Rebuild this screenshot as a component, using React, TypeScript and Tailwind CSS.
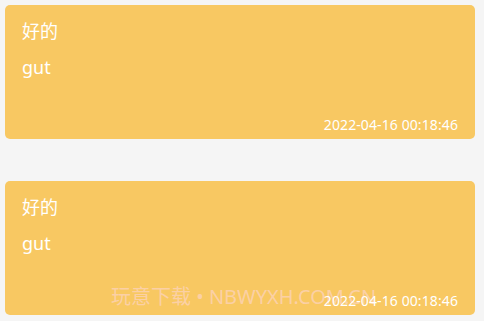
import React from "react";

// -- Data ----------------------------------------------------------------------

type Note = { title: string; body: string; time: string };

const NOTES: Note[] = [
  { title: "好的", body: "gut", time: "2022-04-16 00:18:46" },
  { title: "好的", body: "gut", time: "2022-04-16 00:18:46" },
];

const FONT = { fontFamily: '"Noto Sans", Roboto, "Noto Sans CJK SC", sans-serif' };

// -- Components ----------------------------------------------------------------

const NoteCard: React.FC<{ note: Note; watermark?: boolean }> = ({ note, watermark }) => (
  <div className="relative h-[134px] rounded-[5px] bg-[#f8c862] text-white px-[17px] flex flex-col">
    <div className="pt-[14px] text-[18px] leading-[24px]">{note.title}</div>
    <div className="mt-[12px] text-[18px] leading-[24px]">{note.body}</div>
    {watermark && (
      <div className="absolute left-[106px] bottom-[6px] text-[20px] leading-[24px] text-[#fcd3b8]/80 whitespace-nowrap">
        玩意下载 • NBWYXH.COM.CN
      </div>
    )}
    <div className="relative mt-auto mb-[5px] self-end text-[14px] leading-[18px] tracking-[0.1px]">{note.time}</div>
  </div>
);

export default function App() {
  return (
    <div className="w-[484px] h-[321px] bg-[#f5f5f5] overflow-hidden pt-[5px] pl-[5px] pr-[9px] flex flex-col gap-[42px]" style={FONT}>
      {NOTES.map((n, i) => (
        <NoteCard key={i} note={n} watermark={i === 1} />
      ))}
    </div>
  );
}
